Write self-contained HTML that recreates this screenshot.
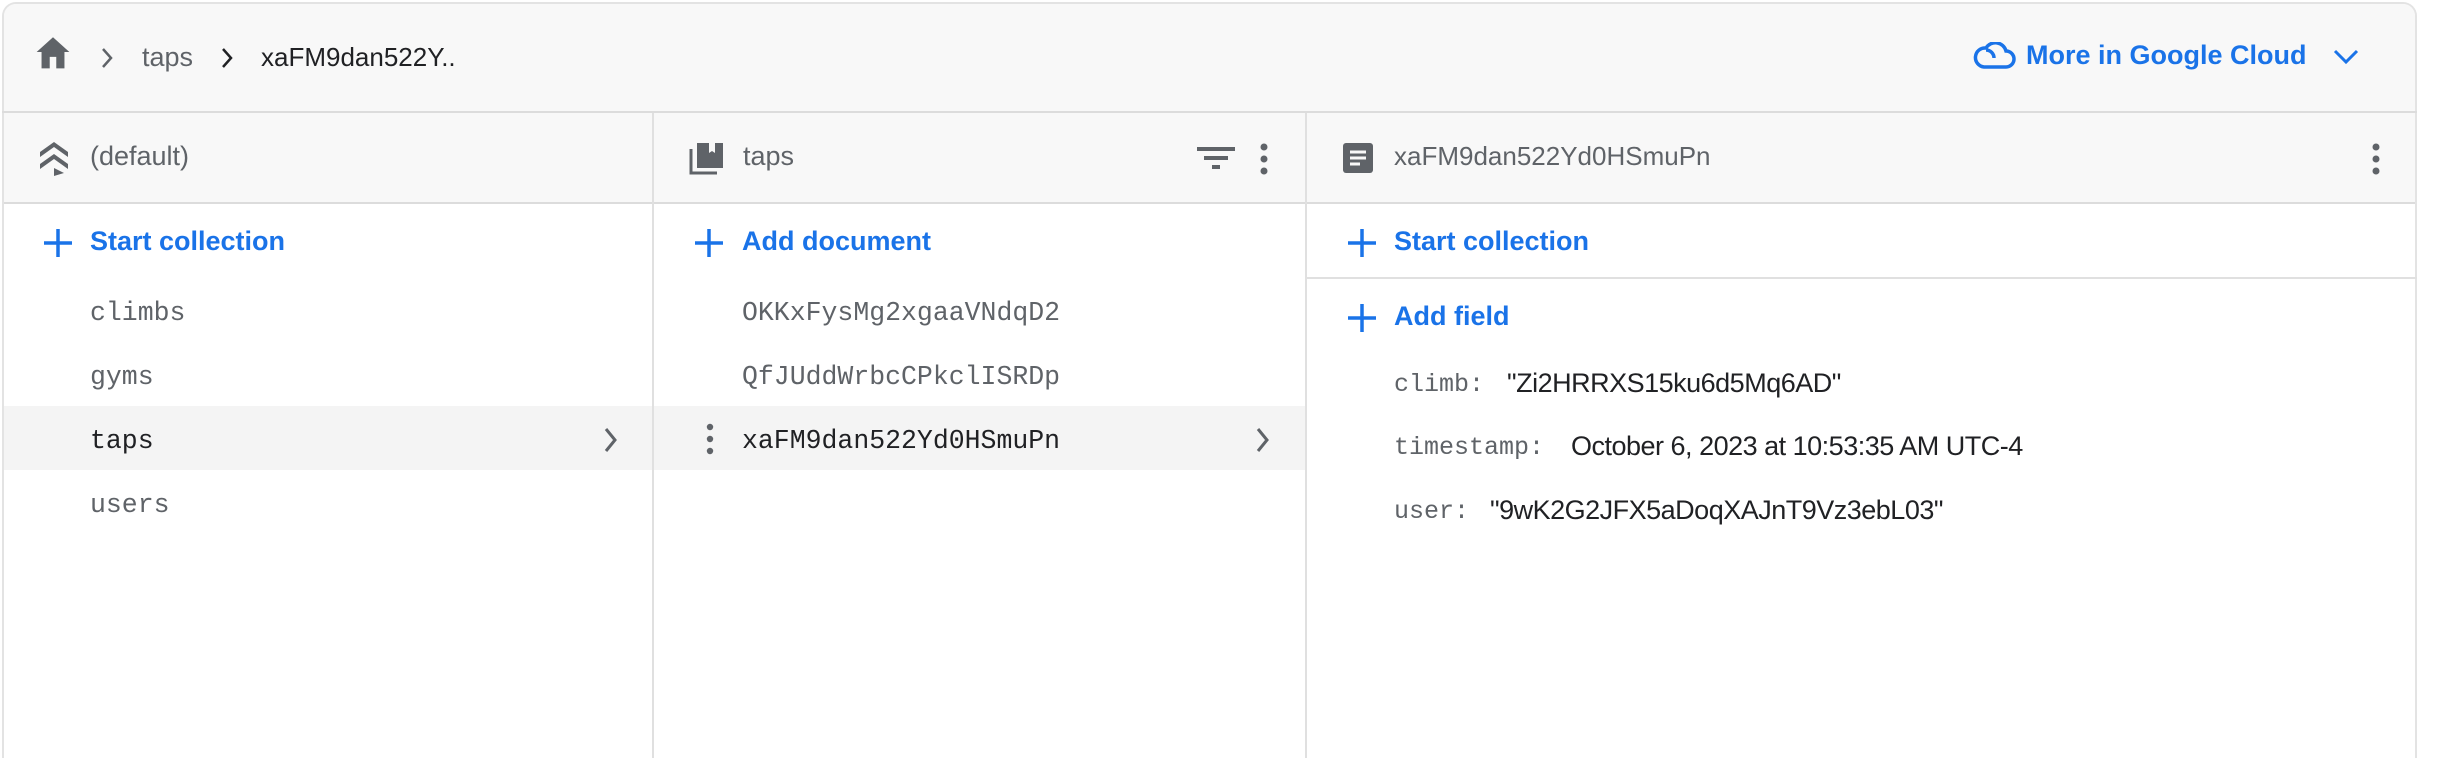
<!DOCTYPE html>
<html style="overflow:hidden;height:758px"><head><meta charset="utf-8"><style>
*{margin:0;padding:0;box-sizing:border-box}
html,body{width:2438px;height:758px;overflow:hidden}
body{background:#fff;position:relative;font-family:"Liberation Sans",Arial,sans-serif}
.a{position:absolute;white-space:nowrap}
.card{position:absolute;left:2px;top:2px;width:2415px;height:756px;border:2px solid #e3e3e3;border-bottom:none;border-radius:14px 14px 0 0;background:#fff;overflow:hidden}
.mono{font-family:"Liberation Mono",monospace;font-size:26.5px}
.blue{color:#1a73e8;font-size:28px;letter-spacing:0.3px}
.g{color:#5f6368}
.d{color:#202124}
</style></head><body>
<div class="card"></div>
<!-- header -->
<div class="a" style="left:4px;top:4px;width:2411px;height:108px;background:#f8f8f8;border-radius:12px 12px 0 0"></div>
<div class="a" style="left:2px;top:111px;width:2415px;height:2px;background:#dcdcdc"></div>
<svg class="a" style="left:33px;top:34px" width="40" height="36" viewBox="0 0 24 22"><path d="M10 21v-7h4v7h5v-10h3L12 2 2 11h3v10z" fill="#5f6368"/></svg>
<svg class="a" style="left:100px;top:46px" width="14" height="24" viewBox="0 0 14 24"><path d="M3 3l8 9-8 9" fill="none" stroke="#5f6368" stroke-width="2.5"/></svg>
<div class="a g" style="left:142px;top:42px;font-size:27px">taps</div>
<svg class="a" style="left:220px;top:46px" width="14" height="24" viewBox="0 0 14 24"><path d="M3 3l8 9-8 9" fill="none" stroke="#202124" stroke-width="2.5"/></svg>
<div class="a d" style="left:261px;top:42px;font-size:26px">xaFM9dan522Y..</div>
<svg class="a" style="left:1972px;top:42px" width="44" height="28" viewBox="0 0 44 28"><path d="M12 25h22a8 8 0 0 0 0-16 11 11 0 0 0-20-3 9.5 9.5 0 0 0-2 19zM14 8a8 8 0 0 1 8 8" fill="none" stroke="#1a73e8" stroke-width="3.5"/></svg>
<div class="a blue" style="left:2026px;top:40px;font-weight:bold;font-size:27px;letter-spacing:0">More in Google Cloud</div>
<svg class="a" style="left:2332px;top:48px" width="28" height="18" viewBox="0 0 28 18"><path d="M3 3l11 11 11-11" fill="none" stroke="#1a73e8" stroke-width="3"/></svg>
<!-- column headers -->
<div class="a" style="left:4px;top:113px;width:2411px;height:89px;background:#f8f8f8"></div>
<div class="a" style="left:4px;top:202px;width:2411px;height:2px;background:#dcdcdc"></div>
<div class="a" style="left:652px;top:113px;width:2px;height:645px;background:#e0e0e0"></div>
<div class="a" style="left:1305px;top:113px;width:2px;height:645px;background:#e0e0e0"></div>
<div class="a" style="left:1307px;top:277px;width:1110px;height:2px;background:#e0e0e0"></div>
<!-- col1 -->
<svg class="a" style="left:38px;top:140px" width="32" height="36" viewBox="0 0 32 36"><path d="M2 12L16 2l14 10v5L16 7 2 17zM2 24l14-10 14 10v5L16 19 2 29zM16 28l10 5-10 3z" fill="#5f6368"/></svg>
<div class="a g" style="left:90px;top:141px;font-size:27px">(default)</div>
<svg class="a" style="left:43px;top:228px" width="30" height="30" viewBox="0 0 30 30"><path d="M15 1v28M1 15h28" stroke="#1a73e8" stroke-width="3.5"/></svg>
<div class="a blue" style="left:90px;top:226px;font-weight:bold;font-size:27px;letter-spacing:0">Start collection</div>
<div class="a mono g" style="left:90px;top:298px">climbs</div>
<div class="a mono g" style="left:90px;top:362px">gyms</div>
<div class="a" style="left:4px;top:406px;width:648px;height:64px;background:#f4f4f4"></div>
<div class="a mono d" style="left:90px;top:426px">taps</div>
<svg class="a" style="left:603px;top:426px" width="16" height="28" viewBox="0 0 16 28"><path d="M3 3l9 11-9 11" fill="none" stroke="#5f6368" stroke-width="3"/></svg>
<div class="a mono g" style="left:90px;top:490px">users</div>
<!-- col2 -->
<svg class="a" style="left:689px;top:141px" width="36" height="34" viewBox="0 0 36 34"><path d="M8 2h26v25H8z" fill="#5f6368"/><path d="M2 8v24h26" fill="none" stroke="#5f6368" stroke-width="3"/><path d="M20 2v10l3-2 3 2V2" fill="#f8f8f8"/></svg>
<div class="a g" style="left:743px;top:141px;font-size:27px">taps</div>
<svg class="a" style="left:1197px;top:146px" width="38" height="26" viewBox="0 0 38 26"><path d="M0 3h38M7 12h24M15 21h8" stroke="#5f6368" stroke-width="4"/></svg>
<svg class="a" style="left:1258px;top:143px" width="12" height="32" viewBox="0 0 12 32"><circle cx="6" cy="4" r="3.5" fill="#5f6368"/><circle cx="6" cy="16" r="3.5" fill="#5f6368"/><circle cx="6" cy="28" r="3.5" fill="#5f6368"/></svg>
<svg class="a" style="left:694px;top:228px" width="30" height="30" viewBox="0 0 30 30"><path d="M15 1v28M1 15h28" stroke="#1a73e8" stroke-width="3.5"/></svg>
<div class="a blue" style="left:742px;top:226px;font-weight:bold;font-size:27px;letter-spacing:0">Add document</div>
<div class="a mono g" style="left:742px;top:298px">OKKxFysMg2xgaaVNdqD2</div>
<div class="a mono g" style="left:742px;top:362px">QfJUddWrbcCPkclISRDp</div>
<div class="a" style="left:654px;top:406px;width:651px;height:64px;background:#f4f4f4"></div>
<svg class="a" style="left:704px;top:423px" width="12" height="32" viewBox="0 0 12 32"><circle cx="6" cy="4" r="3.2" fill="#5f6368"/><circle cx="6" cy="16" r="3.2" fill="#5f6368"/><circle cx="6" cy="28" r="3.2" fill="#5f6368"/></svg>
<div class="a mono d" style="left:742px;top:426px">xaFM9dan522Yd0HSmuPn</div>
<svg class="a" style="left:1255px;top:426px" width="16" height="28" viewBox="0 0 16 28"><path d="M3 3l9 11-9 11" fill="none" stroke="#5f6368" stroke-width="3"/></svg>
<!-- col3 -->
<svg class="a" style="left:1343px;top:143px" width="30" height="30" viewBox="0 0 30 30"><rect x="0" y="0" width="30" height="30" rx="3" fill="#5f6368"/><path d="M7 9h16M7 15h16M7 21h10" stroke="#f8f8f8" stroke-width="3"/></svg>
<div class="a g" style="left:1394px;top:141px;font-size:26px">xaFM9dan522Yd0HSmuPn</div>
<svg class="a" style="left:2370px;top:143px" width="12" height="32" viewBox="0 0 12 32"><circle cx="6" cy="4" r="3.5" fill="#5f6368"/><circle cx="6" cy="16" r="3.5" fill="#5f6368"/><circle cx="6" cy="28" r="3.5" fill="#5f6368"/></svg>
<svg class="a" style="left:1347px;top:228px" width="30" height="30" viewBox="0 0 30 30"><path d="M15 1v28M1 15h28" stroke="#1a73e8" stroke-width="3.5"/></svg>
<div class="a blue" style="left:1394px;top:226px;font-weight:bold;font-size:27px;letter-spacing:0">Start collection</div>
<svg class="a" style="left:1347px;top:303px" width="30" height="30" viewBox="0 0 30 30"><path d="M15 1v28M1 15h28" stroke="#1a73e8" stroke-width="3.5"/></svg>
<div class="a blue" style="left:1394px;top:301px;font-weight:bold;font-size:27px;letter-spacing:0">Add field</div>
<div class="a mono g" style="left:1394px;top:370px;font-size:25px">climb:</div>
<div class="a d" style="left:1507px;top:368px;font-size:27px;letter-spacing:-0.5px">"Zi2HRRXS15ku6d5Mq6AD"</div>
<div class="a mono g" style="left:1394px;top:433px;font-size:25px">timestamp:</div>
<div class="a d" style="left:1571px;top:431px;font-size:27px;letter-spacing:-0.5px">October 6, 2023 at 10:53:35 AM UTC-4</div>
<div class="a mono g" style="left:1394px;top:497px;font-size:25px">user:</div>
<div class="a d" style="left:1490px;top:495px;font-size:27px;letter-spacing:-0.5px">"9wK2G2JFX5aDoqXAJnT9Vz3ebL03"</div>
</body></html>
